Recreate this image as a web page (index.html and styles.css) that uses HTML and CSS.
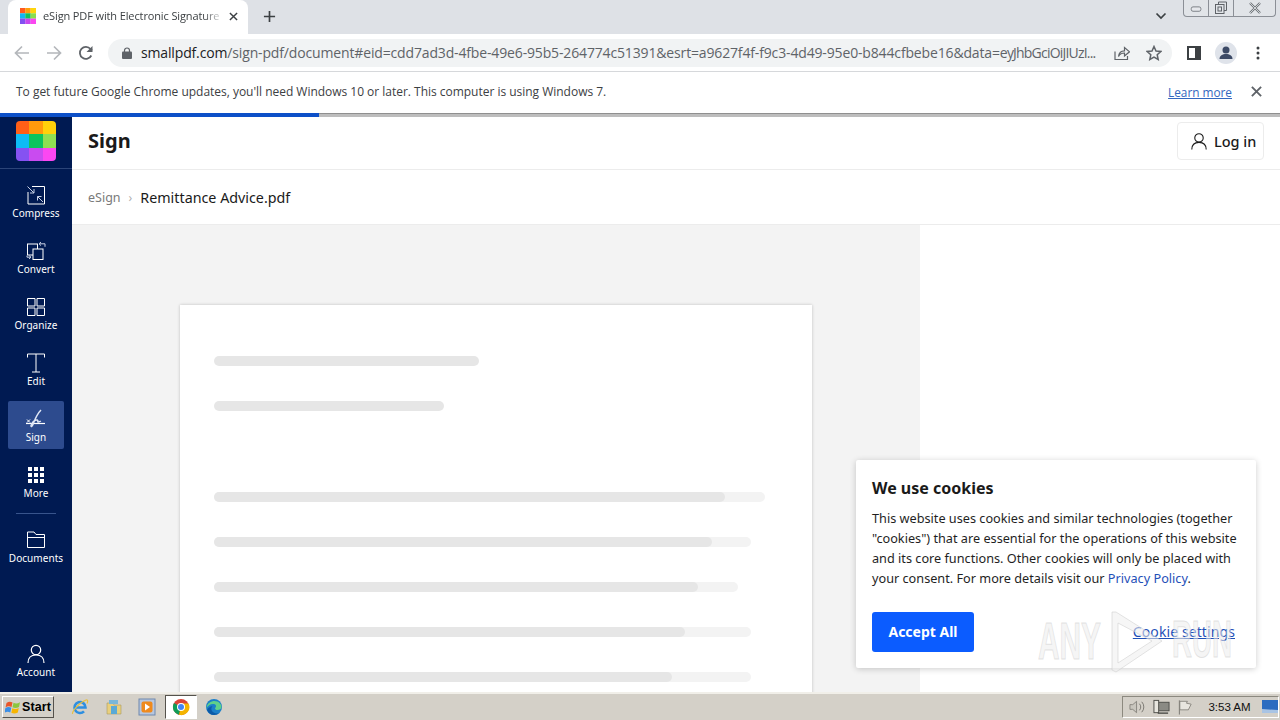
FILE: index.html
```html
<!DOCTYPE html>
<html lang="en">
<head>
<meta charset="utf-8">
<title>eSign PDF with Electronic Signature</title>
<link rel="stylesheet" href="styles.css">
</head>
<body>
<div class="tabstrip">
  <div class="tab">
    <svg class="favicon" viewBox="0 0 16 16"><rect width="5.4" height="5.4" fill="#ff5a1f"/><rect x="5.3" width="5.4" height="5.4" fill="#ff9f0a"/><rect x="10.6" width="5.4" height="5.4" fill="#ffd60a"/><rect y="5.3" width="5.4" height="5.4" fill="#12b5f5"/><rect x="5.3" y="5.3" width="5.4" height="5.4" fill="#10c25e"/><rect x="10.6" y="5.3" width="5.4" height="5.4" fill="#8ade4f"/><rect y="10.6" width="5.4" height="5.4" fill="#8250f0"/><rect x="5.3" y="10.6" width="5.4" height="5.4" fill="#c847ee"/><rect x="10.6" y="10.6" width="5.4" height="5.4" fill="#fa46f0"/></svg>
    <span class="tab-title">eSign PDF with Electronic Signature |</span>
    <svg class="tab-close" viewBox="0 0 10 10"><path d="M1 1l8 8M9 1l-8 8" stroke="#3c4043" stroke-width="1.6" fill="none"/></svg>
  </div>
  <svg class="newtab" viewBox="0 0 14 14"><path d="M7 1v12M1 7h12" stroke="#3c4043" stroke-width="1.8" fill="none"/></svg>
  <div class="strip-fill"></div>
  <svg class="chevron" viewBox="0 0 12 8"><path d="M1.5 1.5L6 6l4.5-4.5" stroke="#3c4043" stroke-width="1.7" fill="none"/></svg>
  <div class="winctl">
    <div class="winbtn win-min"><svg viewBox="0 0 14 8" class="w-min"><rect x="1" y="1" width="11" height="5" rx="2" fill="#e6e8ec" stroke="#70757a"/></svg></div>
    <div class="winbtn win-max"><svg viewBox="0 0 14 14" class="w-max"><path d="M4.500 3.500V1h8v8.500H10" fill="none" stroke="#5f6368"/><rect x="1.500" y="3.500" width="8.500" height="9" fill="none" stroke="#5f6368"/><rect x="4" y="6" width="3.500" height="4" fill="none" stroke="#5f6368"/></svg></div>
    <div class="winbtn win-close"><svg viewBox="0 0 14 12" class="w-close"><path d="M2 1l10 10M12 1L2 11" stroke="#70757a" stroke-width="2.400" fill="none"/><path d="M2 1l10 10M12 1L2 11" stroke="#e6e8ec" stroke-width=".8" fill="none"/></svg></div>
  </div>
</div>

<div class="toolbar">
  <svg class="nav-ic" viewBox="0 0 16 16"><path d="M15 8H2M8 1.500L1.500 8 8 14.500" stroke="#b4b7bb" stroke-width="1.700" fill="none"/></svg>
  <svg class="nav-ic" viewBox="0 0 16 16"><path d="M1 8h13M8 1.500L14.500 8 8 14.500" stroke="#b4b7bb" stroke-width="1.700" fill="none"/></svg>
  <svg class="nav-ic" viewBox="0 0 16 16"><path d="M13.300 10.500A6 6 0 1 1 12.500 4L14 5.500" stroke="#5f6368" stroke-width="1.800" fill="none"/><path d="M14.500 1v6h-6z" fill="#5f6368"/></svg>
  <div class="omnibox">
    <svg class="lock" viewBox="0 0 10 12"><path d="M2.500 5V3.500a2.500 2.500 0 0 1 5 0V5" stroke="#5f6368" stroke-width="1.200" fill="none"/><rect y="4.500" width="10" height="7.500" rx="1" fill="#5f6368"/></svg>
    <span class="url"><span class="url-host">smallpdf.com</span>/sign-pdf/document#eid=cdd7ad3d-4fbe-49e6-95b5-264774c51391&amp;esrt=a9627f4f-f9c3-4d49-95e0-b844cfbebe16&amp;data=<span class="url-tail">eyJhbGciOiJIUzI...</span></span>
    <svg class="share" viewBox="0 0 16 16"><path d="M1 6.500V14.500H13.500V11" stroke="#5f6368" stroke-width="1.200" fill="none"/><path d="M4.500 11.500C5 7.500 8 5.800 10.500 5.800V2.500L15.500 6.800 10.500 11V8C8 8 5.800 9 4.500 11.500z" stroke="#5f6368" stroke-width="1.200" fill="none"/></svg>
    <svg class="star" viewBox="0 0 16 16"><path d="M8 1.500l2 4.500 4.800.5-3.600 3.200 1 4.800L8 12.100l-4.200 2.400 1-4.800L1.200 6.500 6 6z" stroke="#5f6368" stroke-width="1.500" fill="none"/></svg>
  </div>
  <svg class="sidepanel" viewBox="0 0 14 14"><rect x="1" y="1" width="12" height="12" fill="#fff" stroke="#3c4043" stroke-width="2"/><rect x="8" y="1" width="5" height="12" fill="#3c4043"/></svg>
  <div class="avatar"><svg viewBox="0 0 22 22"><circle cx="11" cy="8" r="3.500" fill="#3c4a66"/><path d="M4.500 17c0-3.500 3-5 6.500-5s6.500 1.500 6.500 5z" fill="#3c4a66"/></svg></div>
  <svg class="kebab" viewBox="0 0 4 14"><circle cx="2" cy="2" r="1.500" fill="#3c4043"/><circle cx="2" cy="7" r="1.500" fill="#3c4043"/><circle cx="2" cy="12" r="1.500" fill="#3c4043"/></svg>
</div>

<div class="infobar">
  <span class="info-text">To get future Google Chrome updates, you'll need Windows 10 or later. This computer is using Windows 7.</span>
  <a class="info-link">Learn more</a>
  <svg class="info-close" viewBox="0 0 10 10"><path d="M.8.800l8.400 8.400M9.200.800L.8 9.200" stroke="#5f6368" stroke-width="1.700" fill="none"/></svg>
</div>

<div class="progress"><div class="progress-fill"></div></div>

<div class="app">
  <nav class="sidebar">
    <div class="logo-wrap">
      <svg class="logo" viewBox="0 0 40 40"><defs><clipPath id="lc"><rect width="40" height="40" rx="4"/></clipPath></defs><g clip-path="url(#lc)"><rect width="14" height="14" fill="#ff5f17"/><rect x="13" width="14" height="14" fill="#ff9a0c"/><rect x="27" width="13" height="14" fill="#ffd10a"/><rect y="13" width="14" height="14" fill="#0dbcf5"/><rect x="13" y="13" width="14" height="14" fill="#0cc45e"/><rect x="27" y="13" width="13" height="14" fill="#8fdf52"/><rect y="27" width="14" height="13" fill="#8552f2"/><rect x="13" y="27" width="14" height="13" fill="#c94bf0"/><rect x="27" y="27" width="13" height="13" fill="#fb47f2"/></g></svg>
    </div>
    <div class="nav-list">
      <a class="nav-item"><svg class="nav-svg" viewBox="0 0 20 20"><path d="M6 1.500h12.500V19H2V7" fill="none" stroke="#fff"/><path d="M1.500 1.500L8 8M8 4v4H4M17 17l-5.500-5.500M11.500 15.500v-4h4" fill="none" stroke="#c9d2e6"/></svg><span>Compress</span></a>
      <a class="nav-item"><svg class="nav-svg" viewBox="0 0 20 20"><rect x="1.500" y="3" width="10" height="11" fill="none" stroke="#fff"/><rect x="7" y="8" width="10" height="10.500" fill="#001a52" stroke="#fff"/><path d="M15 1l-2 1.800 2 1.800M13.200 2.800H19v3M3 18l2-1.800L3 14.500M4.800 16.200H1v-1.500" fill="none" stroke="#c9d2e6"/></svg><span>Convert</span></a>
      <a class="nav-item"><svg class="nav-svg" viewBox="0 0 20 20"><path d="M1.500 1.500h7.500v7.500H1.500zM11 1.500h7.500v7.500H11zM1.500 11h7.500v7.500H1.500zM11 11h7.500v7.500H11z" fill="none" stroke="#fff"/></svg><span>Organize</span></a>
      <a class="nav-item"><svg class="nav-svg" viewBox="0 0 20 20"><path d="M1.500 4.500V1h17v3.500M10 1v18M6 19h8" fill="none" stroke="#fff"/></svg><span>Edit</span></a>
      <a class="nav-item active"><svg class="nav-svg" viewBox="0 0 20 20"><path d="M0 14.500h19" stroke="#fff" stroke-width="1.200"/><path d="M1 10.500l3 3M4 10.500l-3 3" stroke="#fff"/><path d="M15 1C12 4 9.500 9 7.500 14c-.8 2-1.500 3.800-2.300 3.300-.7-.5 1-4.300 3.600-5.800 2-1.200 3.500-.5 3 1-.3 1 1.500.7 3-.5" fill="none" stroke="#dfe6f5" stroke-width="1.500"/></svg><span>Sign</span></a>
      <a class="nav-item"><svg class="nav-svg" viewBox="0 0 20 20"><path d="M2 2h4v4H2zM8 2h4v4H8zM14 2h4v4h-4zM2 8h4v4H2zM8 8h4v4H8zM14 8h4v4h-4zM2 14h4v4H2zM8 14h4v4H8zM14 14h4v4h-4z" fill="#fff"/></svg><span>More</span></a>
    </div>
    <div class="nav-rule"></div>
    <a class="nav-item"><svg class="nav-svg" viewBox="0 0 20 20"><path d="M1.500 17.500V2h6.500l2 2.500h8.500v13zM1.500 7.500h17" fill="none" stroke="#fff"/></svg><span>Documents</span></a>
    <div class="nav-spacer"></div>
    <a class="nav-item"><svg class="nav-svg" viewBox="0 0 20 20"><circle cx="10" cy="6" r="4.700" fill="none" stroke="#fff" stroke-width="1.200"/><path d="M2 19c0-5 3-8 8-8s8 3 8 8" fill="none" stroke="#fff" stroke-width="1.200"/></svg><span>Account</span></a>
  </nav>

  <main class="main">
    <header class="topbar">
      <h1 class="page-title">Sign</h1>
      <button class="login"><svg viewBox="0 0 20 20"><circle cx="10" cy="6" r="4.700" fill="none" stroke="#1a1a1a" stroke-width="1.200"/><path d="M2 19c0-5 3-8 8-8s8 3 8 8" fill="none" stroke="#1a1a1a" stroke-width="1.200"/></svg><span>Log in</span></button>
    </header>
    <div class="crumbs"><span class="crumb-root">eSign</span><span class="crumb-sep">›</span><span class="crumb-file">Remittance Advice.pdf</span></div>
    <div class="workspace">
      <div class="stage">
        <div class="doc">
          <div class="sk sk-head sk-w1"></div>
          <div class="sk sk-head sk-w2"></div>
          <div class="sk-gap"></div>
          <div class="track t1"><div class="sk f1"></div></div>
          <div class="track t2"><div class="sk f2"></div></div>
          <div class="track t3"><div class="sk f3"></div></div>
          <div class="track t4"><div class="sk f4"></div></div>
          <div class="track t5"><div class="sk f5"></div></div>
        </div>
      </div>
      <div class="rightpane"></div>
    </div>
  </main>
</div>

<div class="taskbar">
  <div class="start"><svg viewBox="0 0 16 16"><path d="M1.500 4C3.500 2.500 5.500 2.500 7.500 3.500L6.500 8C4.500 7 2.500 7 .5 8.500z" fill="#e8562a"/><path d="M8.500 3.800C10.500 4.800 12.500 4.800 15 3.300L14 8C12 9.300 9.500 9.300 7.500 8.300z" fill="#8cc63f"/><path d="M.3 9.300C2.300 7.800 4.300 7.800 6.300 8.800L5.300 13.500C3.300 12.500 1.300 12.500-.7 14z" fill="#3a8ee6"/><path d="M7.300 9.200C9.300 10.200 11.800 10.200 13.800 8.900L12.800 13.500C10.800 14.800 8.300 14.800 6.300 13.800z" fill="#f7b500"/></svg><span>Start</span></div>
  <div class="quick">
    <svg viewBox="0 0 18 18"><path d="M3.500 9.500h11a5.500 5.500 0 1 0-1.500 3.800" fill="none" stroke="#2f8fe0" stroke-width="2.600"/><path d="M1.500 16C1 14 7 5 15 2c2-.6 2 1.500 1 3.500" fill="none" stroke="#e8c040" stroke-width="1.200"/></svg>
    <svg viewBox="0 0 18 18"><path d="M2 5h6l1 2h7v9H2z" fill="#e9cf7d" stroke="#a89a62" stroke-width=".6"/><rect x="6" y="8" width="6" height="8" fill="#5aa9d6"/><rect x="4" y="2" width="9" height="4" fill="#79b7d9"/></svg>
    <svg viewBox="0 0 18 18"><rect x="1" y="1" width="16" height="16" fill="#b7c7df" stroke="#6f88ad"/><rect x="3.500" y="3.500" width="11" height="11" rx="2" fill="#ef8a1d"/><path d="M7 5.500l5 3.500-5 3.500z" fill="#fff"/></svg>
    <div class="task-active"><svg viewBox="0 0 18 18"><circle cx="9" cy="9" r="8" fill="#db4437"/><path d="M9 9L2 5a8 8 0 0 0 5 11.800z" fill="#0f9d58"/><path d="M9 9l-2 7.800A8 8 0 0 0 16.500 5.500H9z" fill="#f4b400"/><circle cx="9" cy="9" r="4" fill="#fff"/><circle cx="9" cy="9" r="3" fill="#4285f4"/></svg></div>
    <svg viewBox="0 0 18 18"><circle cx="9" cy="9" r="8" fill="#1b7fc9"/><path d="M1.500 10C2 5 6 3 9.500 3c4 0 7 3 7 6 0 2-2 3-4 3-1.500 0-2.500-.7-2.500-1.500 0-1 1-1 1-2.500C11 6.500 9.500 6 8 6c-3 0-5 2-6.500 4z" fill="#5fd08a"/><path d="M2 12c1 3 4 5 7 5 2 0 4-.7 5.500-2-3 1-7 0-8-3-.5-2 .3-3 1-4-2.500.5-4.500 2-5.500 4z" fill="#0b5aa8"/></svg>
  </div>
  <div class="task-fill"></div>
  <div class="tray">
    <svg viewBox="0 0 18 16"><path d="M1 5.500h3L8 2v12l-4-3.500H1z" fill="#c9c6be" stroke="#77756e" stroke-width=".8"/><path d="M11 4.500a5 5 0 0 1 0 7M13.500 2.500a8 8 0 0 1 0 11" stroke="#77756e" fill="none"/></svg>
    <svg viewBox="0 0 18 16"><rect x="5" y="3" width="12" height="9" fill="#8a8a84" stroke="#4e4e4a"/><rect x="1" y="1" width="5" height="13" fill="#e8e6df" stroke="#4e4e4a"/><path d="M5 14.500h11" stroke="#4e4e4a" stroke-width="1.500"/></svg>
    <svg viewBox="0 0 18 16"><path d="M2.500 1v15" stroke="#77756e"/><path d="M3 2h8l-1 2 5 1-3 6H3z" fill="#e8e6df" stroke="#77756e" stroke-width=".8"/></svg>
    <span class="clock">3:53 AM</span>
    <svg class="showdesk" viewBox="0 0 16 14"><rect width="16" height="13" fill="#2b6cc0"/><path d="M0 9l16 1v3H0z" fill="#a9c4e4"/></svg>
  </div>
</div>

<section class="cookie">
  <h2 class="cookie-title">We use cookies</h2>
  <p class="cookie-text">This website uses cookies and similar technologies (together "cookies") that are essential for the operations of this website and its core functions. Other cookies will only be placed with your consent. For more details visit our <a class="cookie-policy">Privacy Policy</a>.</p>
  <div class="cookie-actions">
    <button class="accept">Accept All</button>
    <a class="cookie-settings">Cookie settings</a>
  </div>
</section>

<svg class="watermark" viewBox="0 0 200 64">
  <text class="wm-text" x="0" y="50" textLength="63" lengthAdjust="spacingAndGlyphs">ANY</text>
  <path class="wm-shape" d="M74 3v58l4 2 46-31L78 3zM80 14l34 18-34 22z"/>
  <text class="wm-text" x="134" y="48" textLength="60" lengthAdjust="spacingAndGlyphs">RUN</text>
</svg>
</body>
</html>
```

FILE: styles.css
```css
* { box-sizing: border-box; }
html, body { margin: 0; padding: 0; height: 720px; overflow: hidden; }
body { display: flex; flex-direction: column; width: 1280px; background: #fff; font-family: "Noto Sans", sans-serif; color: #1a1a1a; position: relative; }
a { text-decoration: none; }
svg { display: block; flex: none; }

/* browser chrome */
.tabstrip { height: 34px; flex: none; background: #dee1e6; display: flex; align-items: flex-start; padding-left: 8px; }
.tab { width: 240px; height: 34px; background: #fff; border-radius: 8px 8px 0 0; display: flex; align-items: center; padding: 0 10px 2px 12px; }
.favicon { width: 16px; height: 16px; }
.tab-title { margin-left: 7px; font: 11px/16px "Open Sans", sans-serif; letter-spacing: -.12px; color: #3c4043; white-space: nowrap; flex: 1; width: 0; -webkit-mask-image: linear-gradient(90deg, #000 90%, rgba(0,0,0,.15) 100%); mask-image: linear-gradient(90deg, #000 90%, rgba(0,0,0,.15) 100%); }
.tab-close { width: 9px; height: 9px; margin-left: 8px; }
.newtab { width: 13px; height: 13px; margin: 10px 0 0 15px; }
.strip-fill { flex: 1; }
.chevron { width: 12px; height: 8px; margin: 12px 16px 0 0; }
.winctl { display: flex; height: 17px; width: 93px; margin-right: 4px; border: 1px solid #8b8f96; border-top: 0; border-radius: 0 0 4px 4px; background: #e1e4e8; }
.winbtn { display: flex; align-items: center; justify-content: center; }
.win-min { width: 25px; border-right: 1px solid #8b8f96; }
.win-max { width: 25px; border-right: 1px solid #8b8f96; }
.win-close { flex: 1; }
.w-min { width: 13px; height: 7px; margin-top: 3px; }
.w-max { width: 14px; height: 14px; }
.w-close { width: 14px; height: 12px; }

.toolbar { height: 38px; flex: none; background: #fff; border-bottom: 1px solid #d6d8db; display: flex; align-items: center; padding: 0 14px; }
.nav-ic { width: 16px; height: 16px; margin-right: 16px; }
.omnibox { margin-left: -2px; width: 1064px; height: 28px; background: #f1f3f4; border-radius: 14px; display: flex; align-items: center; padding-left: 14px; }
.lock { width: 10px; height: 12px; }
.url { width: 956px; margin-left: 9px; font: 14px/20px "Open Sans", sans-serif; letter-spacing: -.15px; color: #5f6368; white-space: nowrap; }
.url-host { color: #202124; }
.url-tail { letter-spacing: -.8px; }
.share { width: 16px; height: 16px; margin-left: 17px; }
.star { width: 16px; height: 16px; margin-left: 16px; }
.sidepanel { width: 14px; height: 14px; margin-left: 15px; }
.avatar { width: 22px; height: 22px; border-radius: 50%; background: #dfe3ea; margin-left: 14px; }
.avatar svg { width: 22px; height: 22px; }
.kebab { width: 4px; height: 14px; margin-left: 19px; }

.infobar { height: 41px; flex: none; background: #fff; display: flex; align-items: center; padding: 0 18px 2px 16px; }
.info-text { flex: 1; font: 12px/16px "Open Sans", sans-serif; letter-spacing: -.02px; color: #3c4043; }
.info-link { font: 11.800px/16px "Open Sans", sans-serif; color: #3367c0; text-decoration: underline; margin-right: 19px; }
.info-close { width: 11px; height: 11px; }

.progress { height: 4px; flex: none; background: #bdbdbd; box-shadow: inset 0 1px 0 #8f8f8f; }
.progress-fill { width: 319px; height: 4px; background: #0d50c8; }

/* app */
.app { height: 575px; flex: none; display: flex; }
.sidebar { width: 72px; flex: none; background: #001a52; display: flex; flex-direction: column; align-items: center; }
.logo-wrap { width: 72px; height: 52px; flex: none; padding: 4px 16px 0; border-bottom: 1px solid #2b4478; }
.logo { width: 40px; height: 40px; }
.nav-list { margin-top: 8px; display: flex; flex-direction: column; gap: 8px; }
.nav-item { width: 56px; height: 48px; flex: none; border-radius: 2px; display: flex; flex-direction: column; align-items: center; padding-top: 8px; color: #fff; font: 10px/12px "Noto Sans", sans-serif; letter-spacing: .05px; }
.nav-item span { margin-top: 2px; white-space: nowrap; }
.nav-svg { width: 20px; height: 20px; margin-bottom: 0; }
.nav-item.active { background: #2d4b8e; }
.nav-rule { width: 40px; height: 1px; background: #38548c; margin: 8px 0 8px; flex: none; }
.nav-spacer { height: 66px; flex: none; }

.main { flex: 1; display: flex; flex-direction: column; min-width: 0; }
.topbar { height: 53px; flex: none; display: flex; align-items: center; justify-content: space-between; padding: 0 16px 4px; border-bottom: 1px solid #ececec; }
.page-title { margin: 0; font: 700 20px/26px "Noto Sans", sans-serif; color: #1a1a1a; }
.login { width: 87px; height: 38px; display: flex; align-items: center; gap: 6px; padding: 0 0 0 12px; border: 1px solid #ececec; border-radius: 4px; background: #fff; font: 500 14.500px/20px "Noto Sans", sans-serif; color: #1a1a1a; }
.login svg { width: 18px; height: 19px; }
.crumbs { height: 55px; flex: none; display: flex; align-items: center; padding: 0 16px 0; border-bottom: 1px solid #ececec; }
.crumb-root { font-size: 12.500px; color: #7a7a7a; }
.crumb-sep { margin: 0 8px; font-size: 12px; color: #b0b0b0; }
.crumb-file { font-size: 14.300px; color: #1a1a1a; }
.workspace { flex: 1; display: flex; min-height: 0; }
.stage { width: 848px; flex: none; background: #f3f3f3; padding: 80px 108px 0; overflow: hidden; }
.rightpane { flex: 1; background: #fff; }
.doc { width: 632px; height: 500px; background: #fff; box-shadow: 0 0 3px rgba(0,0,0,.22); padding: 51px 0 0 34px; }
.sk { height: 10px; border-radius: 5px; background: #e6e6e6; }
.sk-head { margin-bottom: 35px; }
.sk-w1 { width: 265px; }
.sk-w2 { width: 230px; margin-bottom: 0; }
.sk-gap { height: 81px; }
.track { height: 10px; border-radius: 5px; background: #f3f3f3; margin-bottom: 35px; }
.t1 { width: 551px; } .f1 { width: 511px; }
.t2 { width: 537px; } .f2 { width: 498px; }
.t3 { width: 524px; margin-top: 1px; } .f3 { width: 484px; }
.t4 { width: 537px; } .f4 { width: 471px; }
.t5 { width: 537px; } .f5 { width: 458px; }

/* taskbar */
.taskbar { height: 28px; flex: none; background: #d4d0c8; border-top: 2px solid #f1efe9; display: flex; align-items: center; padding-left: 2px; }
.start { width: 52px; height: 22px; display: flex; align-items: center; gap: 1px; padding-left: 2px; background: #d4d0c8; border: 1px solid; border-color: #fff #55524c #55524c #fff; font: 700 12.500px/16px "Liberation Sans", sans-serif; letter-spacing: .1px; color: #000; }
.start svg { width: 16px; height: 16px; }
.quick { display: flex; align-items: center; margin-left: 17px; gap: 15.500px; }
.quick svg { width: 18px; height: 18px; }
.task-active { width: 32px; height: 24px; margin: 0 -7px; background: #fff; border: 1px solid; border-color: #55524c #fff #fff #55524c; display: flex; align-items: center; justify-content: center; }
.task-fill { flex: 1; }
.tray { width: 157px; height: 22px; margin-right: 1px; border: 1px solid; border-color: #8c897f #fff #fff #8c897f; display: flex; align-items: center; padding-left: 6px; gap: 7px; }
.tray svg { width: 17px; height: 16px; }
.clock { width: 60px; margin-left: 3px; text-align: center; font: 11.500px/14px "Liberation Sans", sans-serif; color: #111; }
.tray .showdesk { width: 16px; height: 14px; margin-left: 0; }

/* overlays */
.cookie { position: absolute; left: 856px; top: 460px; width: 400px; height: 208px; background: #fff; border-radius: 2px; box-shadow: 0 1px 6px rgba(0,0,0,.2); padding: 16px; }
.cookie-title { margin: 0 0 8px; font: 700 16px/24px "Noto Sans", sans-serif; color: #1a1a1a; }
.cookie-text { margin: 0; font: 12.700px/20px "Noto Sans", sans-serif; color: #1f1f1f; }
.cookie-policy { color: #1f50b8; }
.cookie-actions { display: flex; align-items: center; justify-content: space-between; margin-top: 24px; padding-right: 5px; }
.accept { width: 102px; height: 40px; border: 0; border-radius: 3px; background: #0b5cff; color: #fff; font: 700 14px/20px "Noto Sans", sans-serif; }
.cookie-settings { font: 14px/20px "Noto Sans", sans-serif; letter-spacing: .1px; color: #1f50b8; text-decoration: underline; }
.watermark { position: absolute; left: 1038px; top: 609px; width: 200px; height: 64px; pointer-events: none; }
.wm-text { font: 700 52px "Liberation Sans", sans-serif; fill: rgba(238,238,238,.55); stroke: rgba(205,205,205,.55); stroke-width: 1px; }
.wm-shape { fill: rgba(238,238,238,.55); stroke: rgba(205,205,205,.55); stroke-width: 1px; fill-rule: evenodd; }
```
